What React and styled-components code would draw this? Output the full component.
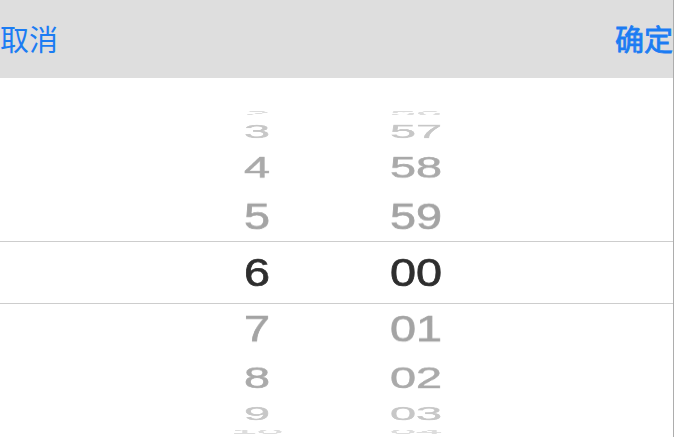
import React from 'react';
import styled, { createGlobalStyle } from 'styled-components';

// drum geometry, measured off the reference (orthographic wheel)
const RADIUS = 161;
const STEP = 20.4;

const hours = [2, 3, 4, 5, 6, 7, 8, 9, 10];
const minutes = ['56', '57', '58', '59', '00', '01', '02', '03', '04'];

const shades = ['#2e2e2e', '#a4a4a4', '#aaaaaa', '#c7c7c7', '#dddddd'];

const GlobalStyle = createGlobalStyle`
  html, body {
    margin: 0;
    padding: 0;
    background: #ffffff;
  }
`;

const Frame = styled.div`
  width: 673px;
  height: 437px;
  border-right: 1px solid #adadad;
  display: flex;
  flex-direction: column;
  overflow: hidden;
  font-family: 'Liberation Sans', Arial, 'Noto Sans CJK SC', sans-serif;
`;

const Toolbar = styled.div`
  height: 78px;
  flex-shrink: 0;
  background: #dedede;
  display: flex;
  align-items: center;
  justify-content: space-between;
  padding-bottom: 2px;
  box-sizing: border-box;
`;

const ToolButton = styled.button`
  border: none;
  background: none;
  padding: 0;
  margin: 0;
  font-family: 'Noto Sans CJK SC', sans-serif;
  font-size: 29px;
  line-height: 1;
  color: #1b7cf3;
  -webkit-text-stroke: ${(props) => (props.strong ? '0.8px #1b7cf3' : '0')};
  cursor: pointer;
`;

const PickerBody = styled.div`
  flex: 1;
  padding-top: 163px;
  overflow: hidden;
  background: #ffffff;
`;

const SelectionBand = styled.div`
  height: 61px;
  border-top: 1px solid #cdcdcd;
  border-bottom: 1px solid #cdcdcd;
  display: flex;
  justify-content: center;
  gap: 59px;
`;

const Wheel = styled.div`
  width: 100px;
  height: 61px;
  display: grid;
`;

const WheelItem = styled.div`
  grid-area: 1 / 1;
  height: 61px;
  line-height: 61px;
  text-align: center;
  font-size: 39px;
  color: ${(props) => shades[props.distance]};
  -webkit-text-stroke: 0.7px ${(props) => shades[props.distance]};
  backface-visibility: hidden;
`;

const WheelColumn = ({ values }) => (
  <Wheel>
    {values.map((value, i) => {
      const offset = i - 4;
      return (
        <WheelItem
          key={value}
          distance={Math.abs(offset)}
          style={{
            transform: `rotateX(${-offset * STEP}deg) translateZ(${RADIUS}px) scaleX(1.2)`,
          }}
        >
          {value}
        </WheelItem>
      );
    })}
  </Wheel>
);

export default function App() {
  return (
    <>
      <GlobalStyle />
      <Frame>
        <Toolbar>
          <ToolButton>取消</ToolButton>
          <ToolButton strong>确定</ToolButton>
        </Toolbar>
        <PickerBody>
          <SelectionBand>
            <WheelColumn values={hours} />
            <WheelColumn values={minutes} />
          </SelectionBand>
        </PickerBody>
      </Frame>
    </>
  );
}
